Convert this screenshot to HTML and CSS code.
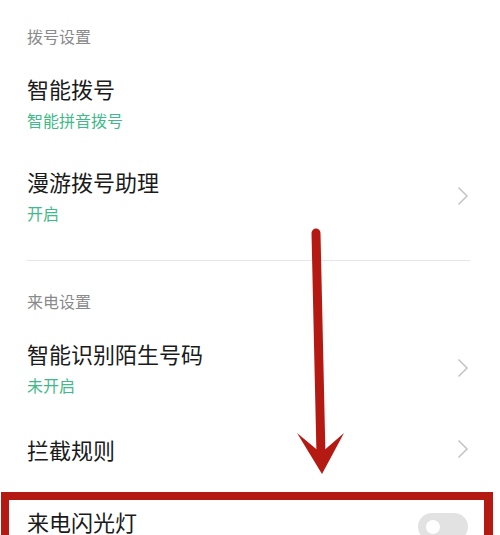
FILE: index.html
```html
<!DOCTYPE html>
<html lang="zh">
<head>
<meta charset="utf-8">
<link rel="stylesheet" href="styles.css">
</head>
<body>
<div class="page">
  <section class="group">
    <div class="group-title">拨号设置</div>
    <div class="item">
      <div class="text">
        <div class="title">智能拨号</div>
        <div class="sub">智能拼音拨号</div>
      </div>
    </div>
    <div class="item">
      <div class="text">
        <div class="title">漫游拨号助理</div>
        <div class="sub">开启</div>
      </div>
      <svg class="chev" width="12" height="20" viewBox="0 0 12 20"><path d="M1.5 1.5 L10 10 L1.5 18.5" fill="none" stroke="#c6c6c6" stroke-width="1.6"/></svg>
    </div>
  </section>
  <div class="divider"></div>
  <section class="group second">
    <div class="group-title">来电设置</div>
    <div class="item">
      <div class="text">
        <div class="title">智能识别陌生号码</div>
        <div class="sub">未开启</div>
      </div>
      <svg class="chev" width="12" height="20" viewBox="0 0 12 20"><path d="M1.5 1.5 L10 10 L1.5 18.5" fill="none" stroke="#c6c6c6" stroke-width="1.6"/></svg>
    </div>
    <div class="item single">
      <div class="text">
        <div class="title">拦截规则</div>
      </div>
      <svg class="chev" width="12" height="20" viewBox="0 0 12 20"><path d="M1.5 1.5 L10 10 L1.5 18.5" fill="none" stroke="#c6c6c6" stroke-width="1.6"/></svg>
    </div>
    <div class="item single flash">
      <div class="text">
        <div class="title">来电闪光灯</div>
      </div>
      <div class="toggle"><span class="knob"></span></div>
    </div>
  </section>
</div>
<div class="highlight"></div>
<svg class="arrow" width="500" height="535" viewBox="0 0 500 535">
  <line x1="316" y1="233" x2="321" y2="456" stroke="#b51a12" stroke-width="9" stroke-linecap="round"/>
  <polygon points="297,433 321,453 344,433 322,474" fill="#b51a12"/>
</svg>
</body>
</html>
```
FILE: styles.css
```css
html, body {
  margin: 0;
  padding: 0;
  background: #ffffff;
}
body {
  width: 500px;
  height: 535px;
  overflow: hidden;
  position: relative;
  font-family: "Noto Sans CJK SC", "Noto Sans", sans-serif;
}
.page {
  padding: 24px 32px 0 27px;
}
.group-title {
  font-size: 16px;
  line-height: 24px;
  color: #8a8a8a;
  margin-bottom: 8px;
}
.item {
  display: flex;
  align-items: center;
  justify-content: space-between;
  padding: 17px 0;
}
.item.single {
  padding: 20px 0;
}
.item.flash {
  padding-top: 17px;
}
.title {
  font-size: 22px;
  line-height: 30px;
  color: #1a1a1a;
}
.sub {
  font-size: 16px;
  line-height: 24px;
  color: #3fba88;
  margin-top: 5px;
}
.chev {
  display: block;
  margin-right: -1px;
}
.divider {
  height: 1px;
  background: #e6e6e6;
  margin: 18px -2px 0 0;
}
.second {
  padding-top: 28px;
}
.toggle {
  width: 50px;
  height: 28px;
  border-radius: 14px;
  background: #e2e2e2;
  position: relative;
  align-self: flex-start;
  margin-top: 12px;
}
.knob {
  position: absolute;
  left: 8px;
  top: 7px;
  width: 14px;
  height: 14px;
  border-radius: 50%;
  background: #ffffff;
}
.highlight {
  position: absolute;
  left: 1px;
  top: 492px;
  width: 475px;
  height: 80px;
  border: 8px solid #b51a12;
  border-right-width: 9px;
}
.arrow {
  position: absolute;
  left: 0;
  top: 0;
  pointer-events: none;
}
```
